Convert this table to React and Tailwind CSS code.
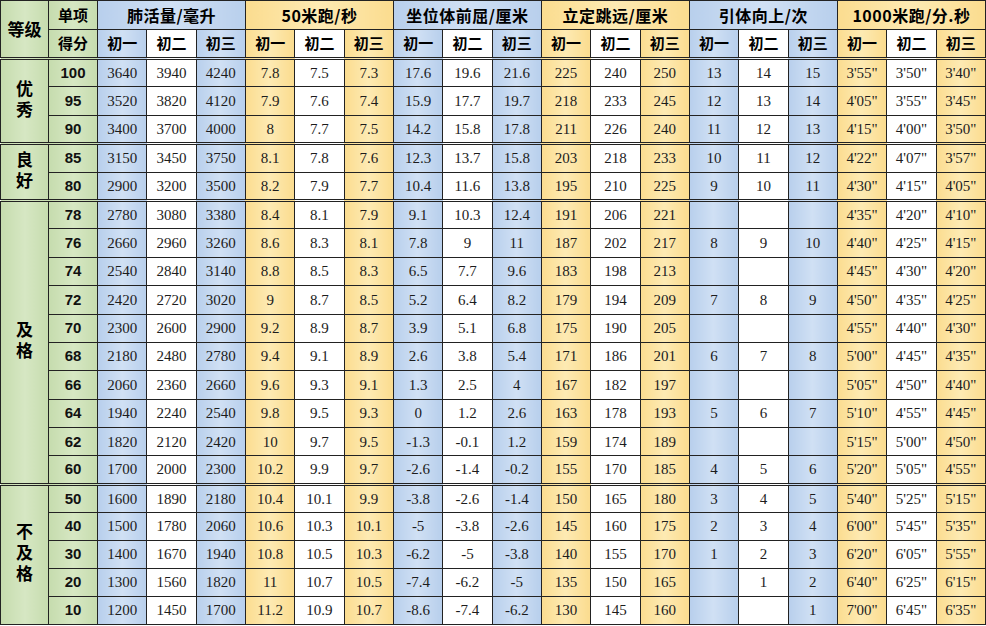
import React from "react";

const groups = [
  { name: "优秀", rows: [
    ["100", "3640","3940","4240","7.8","7.5","7.3","17.6","19.6","21.6","225","240","250","13","14","15","3'55\"","3'50\"","3'40\""],
    ["95", "3520","3820","4120","7.9","7.6","7.4","15.9","17.7","19.7","218","233","245","12","13","14","4'05\"","3'55\"","3'45\""],
    ["90", "3400","3700","4000","8","7.7","7.5","14.2","15.8","17.8","211","226","240","11","12","13","4'15\"","4'00\"","3'50\""],
  ]},
  { name: "良好", rows: [
    ["85", "3150","3450","3750","8.1","7.8","7.6","12.3","13.7","15.8","203","218","233","10","11","12","4'22\"","4'07\"","3'57\""],
    ["80", "2900","3200","3500","8.2","7.9","7.7","10.4","11.6","13.8","195","210","225","9","10","11","4'30\"","4'15\"","4'05\""],
  ]},
  { name: "及格", rows: [
    ["78", "2780","3080","3380","8.4","8.1","7.9","9.1","10.3","12.4","191","206","221","","","","4'35\"","4'20\"","4'10\""],
    ["76", "2660","2960","3260","8.6","8.3","8.1","7.8","9","11","187","202","217","8","9","10","4'40\"","4'25\"","4'15\""],
    ["74", "2540","2840","3140","8.8","8.5","8.3","6.5","7.7","9.6","183","198","213","","","","4'45\"","4'30\"","4'20\""],
    ["72", "2420","2720","3020","9","8.7","8.5","5.2","6.4","8.2","179","194","209","7","8","9","4'50\"","4'35\"","4'25\""],
    ["70", "2300","2600","2900","9.2","8.9","8.7","3.9","5.1","6.8","175","190","205","","","","4'55\"","4'40\"","4'30\""],
    ["68", "2180","2480","2780","9.4","9.1","8.9","2.6","3.8","5.4","171","186","201","6","7","8","5'00\"","4'45\"","4'35\""],
    ["66", "2060","2360","2660","9.6","9.3","9.1","1.3","2.5","4","167","182","197","","","","5'05\"","4'50\"","4'40\""],
    ["64", "1940","2240","2540","9.8","9.5","9.3","0","1.2","2.6","163","178","193","5","6","7","5'10\"","4'55\"","4'45\""],
    ["62", "1820","2120","2420","10","9.7","9.5","-1.3","-0.1","1.2","159","174","189","","","","5'15\"","5'00\"","4'50\""],
    ["60", "1700","2000","2300","10.2","9.9","9.7","-2.6","-1.4","-0.2","155","170","185","4","5","6","5'20\"","5'05\"","4'55\""],
  ]},
  { name: "不及格", short: true, rows: [
    ["50", "1600","1890","2180","10.4","10.1","9.9","-3.8","-2.6","-1.4","150","165","180","3","4","5","5'40\"","5'25\"","5'15\""],
    ["40", "1500","1780","2060","10.6","10.3","10.1","-5","-3.8","-2.6","145","160","175","2","3","4","6'00\"","5'45\"","5'35\""],
    ["30", "1400","1670","1940","10.8","10.5","10.3","-6.2","-5","-3.8","140","155","170","1","2","3","6'20\"","6'05\"","5'55\""],
    ["20", "1300","1560","1820","11","10.7","10.5","-7.4","-6.2","-5","135","150","165","","1","2","6'40\"","6'25\"","6'15\""],
    ["10", "1200","1450","1700","11.2","10.9","10.7","-8.6","-7.4","-6.2","130","145","160","","","1","7'00\"","6'45\"","6'35\""],
  ]},
];

const heads = ["肺活量/毫升", "50米跑/秒", "坐位体前屈/厘米", "立定跳远/厘米", "引体向上/次", "1000米跑/分.秒"];

const BLUE = "bg-[linear-gradient(90deg,#b8cfec_0%,#d0e0f4_50%,#b8cfec_100%)]";
const YELLOW = "bg-[linear-gradient(90deg,#fbdc8f_0%,#fdeab3_50%,#fbdc8f_100%)]";
const WHITE = "bg-white";
const GREEN = "bg-[linear-gradient(90deg,#c6dcae_0%,#d6e7c3_50%,#c6dcae_100%)]";

function colBg(i) {
  const g = Math.floor(i / 3);
  const k = i % 3;
  if (k === 1) return WHITE;
  return g % 2 === 0 ? BLUE : YELLOW;
}

const cjk = "font-['Noto_Sans_CJK_SC',sans-serif]";
const serif = "font-['Liberation_Serif','Noto_Sans_CJK_SC',serif]";

export default function App() {
  return (
    <div className="w-[986px] h-[626px] overflow-hidden bg-white">
      <table className="w-[986px] table-fixed border-collapse border border-[#222] text-center">
        <colgroup>
          <col className="w-[48px]" />
          <col className="w-[49px]" />
          {Array.from({ length: 18 }).map((_, i) => (
            <col key={i} />
          ))}
        </colgroup>
        <thead>
          <tr className="h-[29px]">
            <td rowSpan={2} className={`${GREEN} ${cjk} border border-[#222] text-[17px] font-bold text-black`}>等级</td>
            <td className={`${GREEN} ${cjk} border border-[#222] text-[15px] font-bold text-black`}>单项</td>
            {heads.map((h, g) => (
              <td key={h} colSpan={3} className={`${g % 2 === 0 ? BLUE : YELLOW} ${cjk} border border-[#222] text-[16px] font-bold text-black tracking-[0.5px]`}>{h}</td>
            ))}
          </tr>
          <tr className="h-[29px]">
            <td className={`${GREEN} ${cjk} border border-[#222] text-[15px] font-bold text-black`}>得分</td>
            {Array.from({ length: 18 }).map((_, i) => (
              <td key={i} className={`${colBg(i)} ${cjk} border border-[#222] text-[15px] font-bold text-black`}>{["初一", "初二", "初三"][i % 3]}</td>
            ))}
          </tr>
        </thead>
        <tbody>
          {groups.map((g) =>
            g.rows.map((r, ri) => (
              <tr key={r[0]} className={`${g.short ? "h-[28px]" : "h-[28.4px]"} ${ri === 0 ? "border-t-[3px] border-double border-t-[#222]" : ""}`}>
                {ri === 0 && (
                  <td rowSpan={g.rows.length} className={`${GREEN} ${cjk} border border-[#222] border-t-[3px] border-double text-[17px] font-bold text-black p-0`}>
                    <div className="flex justify-center">
                      <span className="[writing-mode:vertical-rl] tracking-[4px] leading-[17px]">{g.name}</span>
                    </div>
                  </td>
                )}
                <td className={`${GREEN} font-['Liberation_Sans',sans-serif] border border-[#222] text-[15px] font-bold text-[#111] ${ri === 0 ? "border-t-[3px] border-double" : ""}`}>{r[0]}</td>
                {r.slice(1).map((v, i) => (
                  <td key={i} className={`${colBg(i)} ${serif} border border-[#222] text-[15px] text-[#1c1c1c] p-0 ${ri === 0 ? "border-t-[3px] border-double" : ""}`}>{v}</td>
                ))}
              </tr>
            ))
          )}
        </tbody>
      </table>
    </div>
  );
}
